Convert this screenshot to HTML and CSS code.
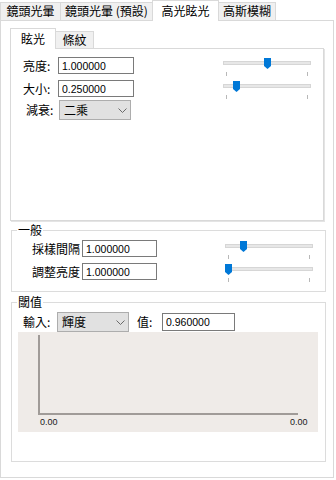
FILE: index.html
```html
<!DOCTYPE html>
<html>
<head>
    <title>高光眩光</title>
    <meta charset="UTF-8">
    <link rel="stylesheet" href="styles.css">
</head>
<body>
    <div class="tabs">
        <div class="tab tab-lens">鏡頭光暈</div>
        <div class="tab tab-preset">鏡頭光暈 (預設)</div>
        <div class="tab tab-glare selected">高光眩光</div>
        <div class="tab tab-blur">高斯模糊</div>
    </div>
    <div class="panel">
        <div class="subtabs">
            <div class="subtab subtab-glare selected">眩光</div>
            <div class="subtab subtab-streak">條紋</div>
        </div>
        <div class="subpanel">
            <div class="row">
                <label class="lbl">亮度:</label>
                <input class="num" value="1.000000">
                <div class="slider">
                    <div class="track"></div>
                    <div class="ticks"><span></span><span></span></div>
                    <svg class="thumb" style="left:45px" width="7" height="11" viewBox="0 0 7 11"><polygon points="0,0 7,0 7,8 3.5,11 0,8" fill="#0078d7"/></svg>
                </div>
            </div>
            <div class="row">
                <label class="lbl">大小:</label>
                <input class="num" value="0.250000">
                <div class="slider">
                    <div class="track"></div>
                    <div class="ticks"><span></span><span></span></div>
                    <svg class="thumb" style="left:14px" width="7" height="11" viewBox="0 0 7 11"><polygon points="0,0 7,0 7,8 3.5,11 0,8" fill="#0078d7"/></svg>
                </div>
            </div>
            <div class="row row-combo">
                <label class="lbl lbl-combo">減衰:</label>
                <div class="combo">
                    <span>二乘</span>
                    <svg width="9" height="5" viewBox="0 0 9 5"><polyline points="0.5,0.5 4.5,4.5 8.5,0.5" fill="none" stroke="#6a6a6a"/></svg>
                </div>
            </div>
        </div>

        <fieldset class="group group-general">
            <legend>一般</legend>
            <div class="group-body">
                <div class="row">
                    <label class="lbl lbl-wide">採樣間隔</label>
                    <input class="num num-wide" value="1.000000">
                    <div class="slider">
                        <div class="track"></div>
                        <div class="ticks"><span></span><span></span></div>
                        <svg class="thumb" style="left:19px" width="7" height="11" viewBox="0 0 7 11"><polygon points="0,0 7,0 7,8 3.5,11 0,8" fill="#0078d7"/></svg>
                    </div>
                </div>
                <div class="row">
                    <label class="lbl lbl-wide">調整亮度</label>
                    <input class="num num-wide" value="1.000000">
                    <div class="slider">
                        <div class="track"></div>
                        <div class="ticks"><span></span><span></span></div>
                        <svg class="thumb" style="left:4px" width="7" height="11" viewBox="0 0 7 11"><polygon points="0,0 7,0 7,8 3.5,11 0,8" fill="#0078d7"/></svg>
                    </div>
                </div>
            </div>
        </fieldset>

        <fieldset class="group group-threshold">
            <legend>閾值</legend>
            <div class="group-body threshold-body">
                <div class="row row-input">
                    <label class="lbl lbl-input">輸入:</label>
                    <div class="combo">
                        <span>輝度</span>
                        <svg width="9" height="5" viewBox="0 0 9 5"><polyline points="0.5,0.5 4.5,4.5 8.5,0.5" fill="none" stroke="#6a6a6a"/></svg>
                    </div>
                    <label class="lbl lbl-value">值:</label>
                    <input class="num num-value" value="0.960000">
                </div>
                <svg class="chart" width="300" height="100" viewBox="0 0 300 100">
                    <rect x="0" y="0" width="300" height="100" fill="#efebe8"/>
                    <line x1="21" y1="3" x2="21" y2="83" stroke="#a09b98" stroke-width="2"/>
                    <line x1="20" y1="82" x2="280" y2="82" stroke="#a09b98" stroke-width="2"/>
                    <text x="22" y="93">0.00</text>
                    <text x="272" y="93">0.00</text>
                </svg>
            </div>
        </fieldset>
    </div>
</body>
</html>
```

FILE: styles.css
```css
body {
    margin: 0;
    background: #fff;
    color: #000;
    font-family: "Noto Sans CJK TC", "Noto Sans CJK JP", sans-serif;
    font-size: 12px;
}

/* outer tab strip */
.tabs {
    display: flex;
    align-items: flex-end;
    height: 20px;
}

.tab {
    box-sizing: border-box;
    height: 18px;
    margin-left: -1px;
    border: 1px solid #d9d9d9;
    border-bottom: 0;
    background: #f0f0f0;
    line-height: 16px;
    text-align: center;
    white-space: nowrap;
}

.tab-lens { width: 61px; margin-left: 0; }
.tab-preset { width: 93px; }
.tab-glare { width: 67px; }
.tab-blur { width: 58px; }

    .tab.selected {
        position: relative;
        z-index: 1;
        height: 21px;
        margin-bottom: -1px;
        background: #fff;
        line-height: 20px;
    }

.panel {
    box-sizing: border-box;
    width: 334px;
    height: 458px;
    padding: 7px 8px 0 9px;
    border: 1px solid #d9d9d9;
    background: #fff;
}

/* inner tab strip */
.subtabs {
    display: flex;
    align-items: flex-end;
    height: 20px;
}

.subtab {
    box-sizing: border-box;
    height: 17px;
    margin-left: -1px;
    border: 1px solid #d9d9d9;
    border-bottom: 0;
    background: #f0f0f0;
    line-height: 16px;
    text-align: center;
}

.subtab-glare { width: 46px; margin-left: 0; }
.subtab-streak { width: 39px; }

    .subtab.selected {
        position: relative;
        z-index: 1;
        height: 21px;
        margin-bottom: -1px;
        background: #fff;
        line-height: 20px;
    }

.subpanel {
    box-sizing: border-box;
    width: 314px;
    height: 173px;
    padding: 8px 0 0 12px;
    border: 1px solid #d9d9d9;
    box-shadow: 1px 1px 0 #e4e4e4;
}

/* form rows */
.row {
    display: flex;
    align-items: center;
    height: 17px;
}

    .row + .row {
        margin-top: 6px;
    }

    .row + .row-combo {
        height: 20px;
        margin-top: 3px;
        padding-left: 3px;
    }

.lbl {
    width: 35px;
    flex: none;
    line-height: 16px;
    white-space: nowrap;
}

.lbl-combo { width: 33px; }
.lbl-wide { width: 50px; }
.lbl-input { width: 34px; }
.lbl-value { width: 25px; margin-left: 8px; }

.num {
    box-sizing: border-box;
    width: 76px;
    height: 17px;
    margin: 0;
    padding: 0 3px;
    border: 1px solid #7a7a7a;
    background: #fff;
    color: #000;
    font: 10.5px "Liberation Sans", Arial, sans-serif;
    outline: none;
}

.num-wide { width: 75px; }
.num-value { width: 73px; height: 18px; }

.combo {
    box-sizing: border-box;
    display: flex;
    align-items: center;
    justify-content: space-between;
    width: 72px;
    height: 20px;
    padding: 0 3px 0 4px;
    border: 1px solid #adadad;
    background: #e1e1e1;
    line-height: 16px;
}

/* track bar */
.slider {
    position: relative;
    align-self: flex-start;
    width: 96px;
    height: 19px;
    margin: 1px 8px 0 auto;
}

.track {
    box-sizing: border-box;
    width: 88px;
    height: 4px;
    margin: 3px 0 0 4px;
    border: 1px solid #d6d6d6;
    background: #e7e7e7;
}

.ticks {
    display: flex;
    justify-content: space-between;
    margin: 7px 7px 0 7px;
}

    .ticks span {
        width: 1px;
        height: 4px;
        background: #b8b8b8;
    }

.thumb {
    position: absolute;
    top: 0;
    display: block;
}

/* group boxes */
.group {
    box-sizing: border-box;
    width: 315px;
    min-width: 0;
    margin: 2px 0 0 1px;
    padding: 0;
    border: 1px solid #dcdcdc;
}

    .group legend {
        margin-left: 5px;
        padding: 0 1px;
        line-height: 14px;
    }

.group-body {
    padding: 3px 0 11px 20px;
}

.group-threshold {
    margin-top: 3px;
}

.threshold-body {
    padding: 3px 0 29px 6px;
}

.row-input {
    height: 20px;
    padding-left: 5px;
}

.chart {
    display: block;
}

    .chart text {
        font: 9px "Liberation Sans", Arial, sans-serif;
        fill: #1a1a1a;
    }
```
